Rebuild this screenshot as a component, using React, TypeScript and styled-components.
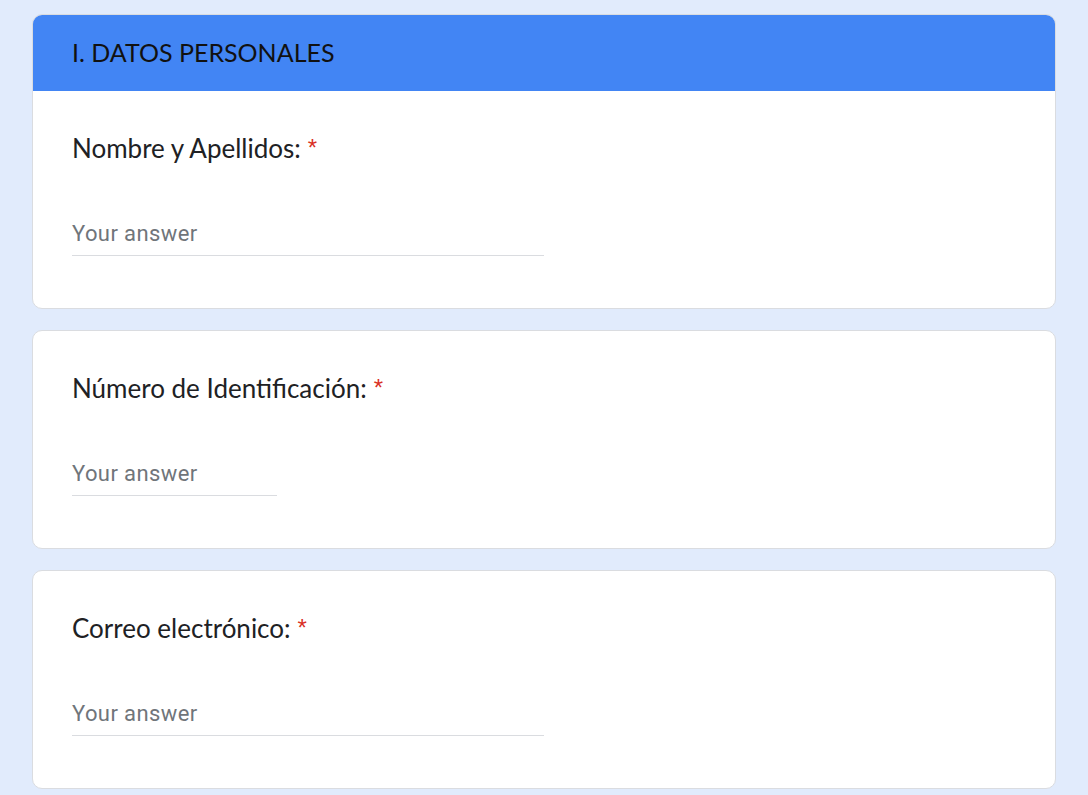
import styled, { createGlobalStyle } from "styled-components";

const GlobalStyle = createGlobalStyle`
  html, body {
    margin: 0;
    padding: 0;
    background: #e1ebfc;
  }
  * {
    box-sizing: border-box;
  }
`;

const Page = styled.main`
  display: flex;
  flex-direction: column;
  gap: 21px;
  padding: 14px 32px 20px 32px;
  min-height: 100vh;
  width: 1088px;
`;

const Card = styled.section`
  background: #ffffff;
  border: 1px solid #dadce0;
  border-radius: 10px;
  overflow: hidden;
`;

const SectionHeader = styled.div`
  background: #4285f4;
  height: 77px;
  margin: -1px -1px 0 -1px;
  padding: 0 0 2px 40px;
  display: flex;
  align-items: center;
  font-family: "Lato", "Open Sans", sans-serif;
  font-size: 25px;
  color: #111111;
`;

const Body = styled.div`
  padding: 41px 40px 52px 39px;
  display: flex;
  flex-direction: column;
  gap: 54px;
`;

const Label = styled.div`
  display: flex;
  align-items: baseline;
  height: 32px;
  font-family: "Lato", "Open Sans", sans-serif;
  font-size: 26px;
  line-height: 32px;
  color: #202124;
`;

const Required = styled.span`
  font-family: "Liberation Sans", Arial, sans-serif;
  font-size: 24px;
  line-height: 1;
  color: #d93025;
  margin-left: 7px;
  position: relative;
  top: -2px;
`;

const Answer = styled.div<{ $width: number }>`
  width: ${(p) => p.$width}px;
  height: 38px;
  padding-top: 2px;
  padding-bottom: 7px;
  border-bottom: 1px solid #dadce0;
  font-family: Roboto, "Liberation Sans", sans-serif;
  font-size: 22px;
  line-height: 28px;
  color: #70757a;
  letter-spacing: 0.4px;
`;

type Question = {
  label: string;
  width: number;
};

const questions: Question[] = [
  { label: "Nombre y Apellidos:", width: 472 },
  { label: "Número de Identificación:", width: 205 },
  { label: "Correo electrónico:", width: 472 },
];

function QuestionBody({ q }: { q: Question }) {
  return (
    <Body>
      <Label>
        {q.label}
        <Required>*</Required>
      </Label>
      <Answer $width={q.width}>Your answer</Answer>
    </Body>
  );
}

export default function App() {
  return (
    <>
      <GlobalStyle />
      <Page>
        <Card>
          <SectionHeader>I. DATOS PERSONALES</SectionHeader>
          <QuestionBody q={questions[0]} />
        </Card>
        {questions.slice(1).map((q) => (
          <Card key={q.label}>
            <QuestionBody q={q} />
          </Card>
        ))}
      </Page>
    </>
  );
}
